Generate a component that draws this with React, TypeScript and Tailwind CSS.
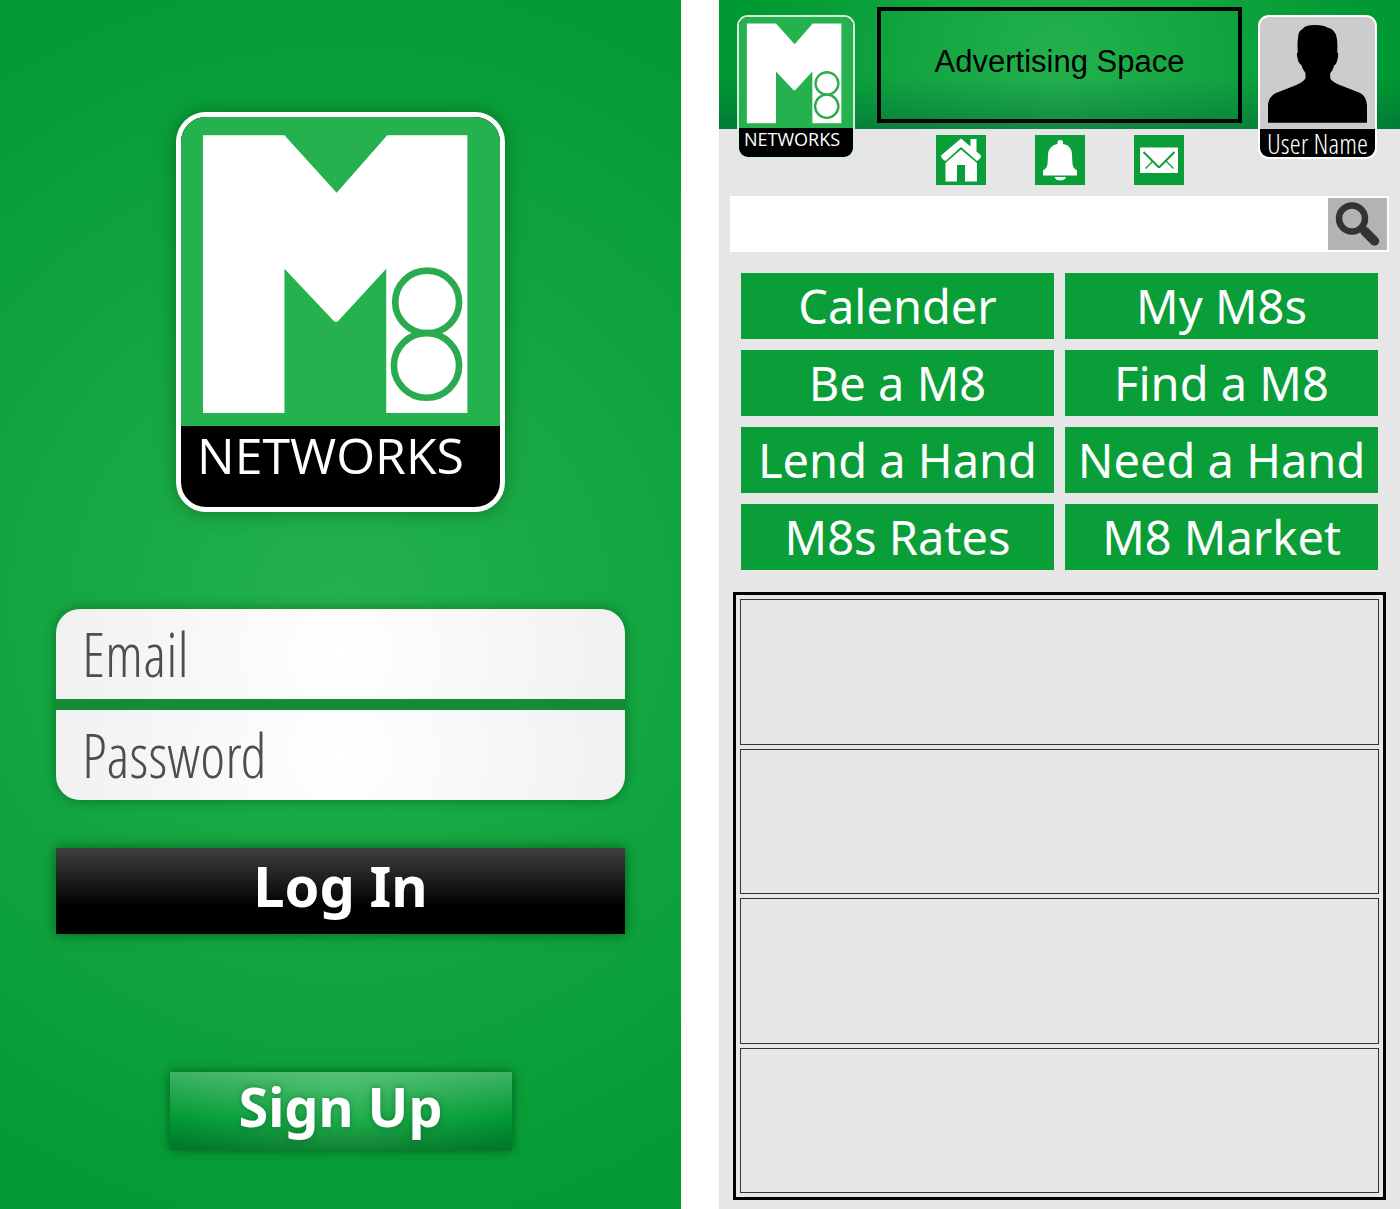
import React from "react";

function LogoMark({ className }: { className: string }) {
  return (
    <svg viewBox="62 64 959 929" preserveAspectRatio="none" className={className} aria-hidden="true">
      <rect x="62" y="64" width="959" height="929" fill="#25b14d" />
      <path
        d="M128 119H373L530 292L682 119H923V954H679V520L536 676Q528 684 520 676L373 520V954H128Z"
        fill="#fff"
      />
      <g fill="#fff" stroke="#2bab50" strokeWidth="20">
        <ellipse cx="802" cy="620" rx="96" ry="94" />
        <ellipse cx="800" cy="811" rx="98" ry="97" />
      </g>
    </svg>
  );
}

function Silhouette() {
  return (
    <svg viewBox="600 50 344 336" preserveAspectRatio="none" className="block h-[112px] w-full" aria-hidden="true">
      <path
        d="M624 367V315Q625 290 646 279L707 255Q731 245 736 234V218Q727 208 724 194Q716 191 713 176Q708 160 713 155Q711 128 714 111Q714 99 720 91Q728 86 734 79Q746 73 766 74Q790 75 803 82Q814 83 822 94Q834 107 831 155Q836 158 832 176Q830 191 822 195Q819 209 810 219V234Q814 243 833 252L898 277Q918 287 920 315V367Z"
        fill="#000"
      />
    </svg>
  );
}

function HomeIcon() {
  return (
    <svg viewBox="0 0 50 50" className="size-full" fill="#fff" aria-hidden="true">
      <path d="M25 3.500L34.500 11.500V4H40.500V16.500L45 20.500Q45.500 23 41 26L25 12L9.500 26Q5 23.500 5 20.500Z" />
      <path d="M25 14.500L41 28V46.500H29V30H21V46.500H9.500V28Z" />
    </svg>
  );
}

function BellIcon() {
  return (
    <svg viewBox="0 0 50 50" className="size-full" fill="#fff" aria-hidden="true">
      <path d="M22.500 9V7Q22.500 5 25 5Q28 5 28 7V9C34 10 37 14 37 20L37.500 29Q38 33 42 35.500V40.500H8V35.500Q12 33 12.500 29L13 20C13 14 17 10 22.500 9Z" />
      <path d="M19.500 42H31Q30 45.500 25 45.500Q21 45.500 19.500 42Z" />
    </svg>
  );
}

function MailIcon() {
  return (
    <svg viewBox="0 0 50 50" className="size-full" aria-hidden="true">
      <rect x="6" y="12.500" width="38" height="25.500" rx="1" fill="#fff" />
      <g fill="none" stroke="#0a9e38">
        <path d="M9.500 17L24 31.500Q25 32.500 26 31.500L40.500 17" strokeWidth="2" />
        <path d="M11.500 33.500L19 26M39.500 33.500L32 26" strokeWidth="1.400" />
      </g>
    </svg>
  );
}

function SearchIcon() {
  return (
    <svg viewBox="0 0 59 52" className="size-full" fill="none" stroke="#333" aria-hidden="true">
      <circle cx="24" cy="20.500" r="13" strokeWidth="6.500" />
      <path d="M33 29.500L37 33.500" strokeWidth="6" />
      <path d="M37 33.500L46.500 43" strokeWidth="9.500" strokeLinecap="round" />
    </svg>
  );
}

const shortcuts = [
  { label: "Home", icon: <HomeIcon /> },
  { label: "Notifications", icon: <BellIcon /> },
  { label: "Messages", icon: <MailIcon /> },
];

const menu = [
  "Calender",
  "My M8s",
  "Be a M8",
  "Find a M8",
  "Lend a Hand",
  "Need a Hand",
  "M8s Rates",
  "M8 Market",
];

const fieldClass =
  "block h-[90px] w-full bg-[radial-gradient(circle_at_center,#ffffff_0%,#f0f0f0_300px)] px-[26px] font-['Open_Sans_Condensed_Light','Open_Sans_Light','Open_Sans',sans-serif] text-[60px] font-light text-[#4d4d4d] outline-none placeholder:text-[#4d4d4d] placeholder:opacity-100";

function LoginScreen() {
  return (
    <main className="flex flex-col items-center bg-[radial-gradient(circle_at_center,#23b14d_0%,#009933_690px)] px-14 pt-28 pb-14">
      <div className="w-[329px] overflow-hidden rounded-[30px] border-[5px] border-white bg-black shadow-[0_0_18px_rgba(0,70,20,0.5)]">
        <LogoMark className="block h-[309px] w-full" />
        <p className="h-[81px] pl-4 font-['Open_Sans',sans-serif] text-[50px] leading-[58px] text-white">
          NETWORKS
        </p>
      </div>
      <form className="mt-[97px] flex w-full flex-col items-center" onSubmit={(e) => e.preventDefault()}>
        <div className="flex w-full flex-col gap-[11px] rounded-[24px] bg-[#148c36] shadow-[0_0_12px_rgba(0,60,15,0.5)]">
          <input type="email" aria-label="Email" placeholder="Email" className={`${fieldClass} rounded-t-[24px]`} />
          <input
            type="password"
            aria-label="Password"
            placeholder="Password"
            className={`${fieldClass} rounded-b-[24px]`}
          />
        </div>
        <button
          type="submit"
          className="mt-12 h-[86px] w-full bg-[linear-gradient(to_bottom,#404040_0%,#000000_68%)] pb-3 font-['Noto_Sans',sans-serif] text-[56px] leading-[74px] font-bold text-white shadow-[0_0_12px_rgba(0,60,15,0.7)]"
        >
          Log In
        </button>
        <button
          type="button"
          className="mt-[138px] h-[78px] w-[342px] bg-[linear-gradient(to_bottom,rgba(255,255,255,0.25)_0%,rgba(255,255,255,0)_60%,rgba(0,50,20,0.35)_100%),radial-gradient(circle_at_center,#23b14d_0%,#009933_170px)] pb-2.5 font-['Noto_Sans',sans-serif] text-[54px] leading-[68px] font-bold text-white shadow-[0_0_10px_rgba(0,60,15,0.7)] text-shadow-[0_0_6px_rgba(0,80,30,0.5)]"
        >
          Sign Up
        </button>
      </form>
    </main>
  );
}

function HomeScreen() {
  return (
    <main className="flex flex-col bg-[#e6e6e6] pb-[9px]">
      <header className="flex h-[129px] items-start bg-[linear-gradient(to_bottom,rgba(0,60,50,0)_60%,rgba(0,80,60,0.4)_100%),radial-gradient(circle_at_center,#23b14d_0%,#009933_300px)] pr-[23px] pl-[18px]">
        <div className="mt-[15px] w-[118px] overflow-hidden rounded-[11px] border-2 border-[#d5eedb] bg-black">
          <LogoMark className="block h-[111px] w-full" />
          <p className="h-[29px] pl-[5px] font-['Open_Sans',sans-serif] text-[18px] leading-[22px] text-white">
            NETWORKS
          </p>
        </div>
        <div className="mt-[7px] mr-4 ml-[22px] flex h-[116px] flex-1 items-center justify-center border-4 border-black pb-1.5 font-['Liberation_Sans',sans-serif] text-[31px] text-black">
          Advertising Space
        </div>
        <div className="mt-[15px] w-[119px] rounded-[11px] border-2 border-white bg-[#cccccc]">
          <Silhouette />
          <p className="rounded-b-[9px] bg-black text-center font-['Open_Sans_Condensed_Light','Open_Sans_Light','Open_Sans',sans-serif] text-[28px] leading-[28px] font-light whitespace-nowrap text-white">
            User Name
          </p>
        </div>
      </header>

      <nav aria-label="Shortcuts" className="mt-1.5 flex justify-center gap-[49px]">
        {shortcuts.map((s) => (
          <button key={s.label} type="button" aria-label={s.label} className="size-[50px] bg-[#0a9e38]">
            {s.icon}
          </button>
        ))}
      </nav>

      <form
        role="search"
        className="mx-[11px] mt-[11px] flex h-14 bg-white p-0.5"
        onSubmit={(e) => e.preventDefault()}
      >
        <input
          type="search"
          aria-label="Search"
          className="min-w-0 flex-1 px-4 font-['Open_Sans',sans-serif] text-2xl outline-none"
        />
        <button type="submit" aria-label="Search" className="w-[59px] bg-[#b3b3b3]">
          <SearchIcon />
        </button>
      </form>

      <nav aria-label="Menu" className="mx-[22px] mt-[21px] grid grid-cols-2 gap-[11px]">
        {menu.map((label) => (
          <button
            key={label}
            type="button"
            className="h-[66px] bg-[#0a9e38] font-['Noto_Sans',sans-serif] text-[47px] leading-[66px] whitespace-nowrap text-white"
          >
            {label}
          </button>
        ))}
      </nav>

      <ul className="mx-3.5 mt-[22px] flex flex-1 flex-col gap-1 border-[3px] border-black p-1">
        {[1, 2, 3, 4].map((n) => (
          <li key={n} className="min-h-24 flex-1 border border-[#333333]" />
        ))}
      </ul>
    </main>
  );
}

export default function App() {
  return (
    <div className="grid min-h-screen grid-cols-2 gap-[38px] bg-white">
      <LoginScreen />
      <HomeScreen />
    </div>
  );
}
